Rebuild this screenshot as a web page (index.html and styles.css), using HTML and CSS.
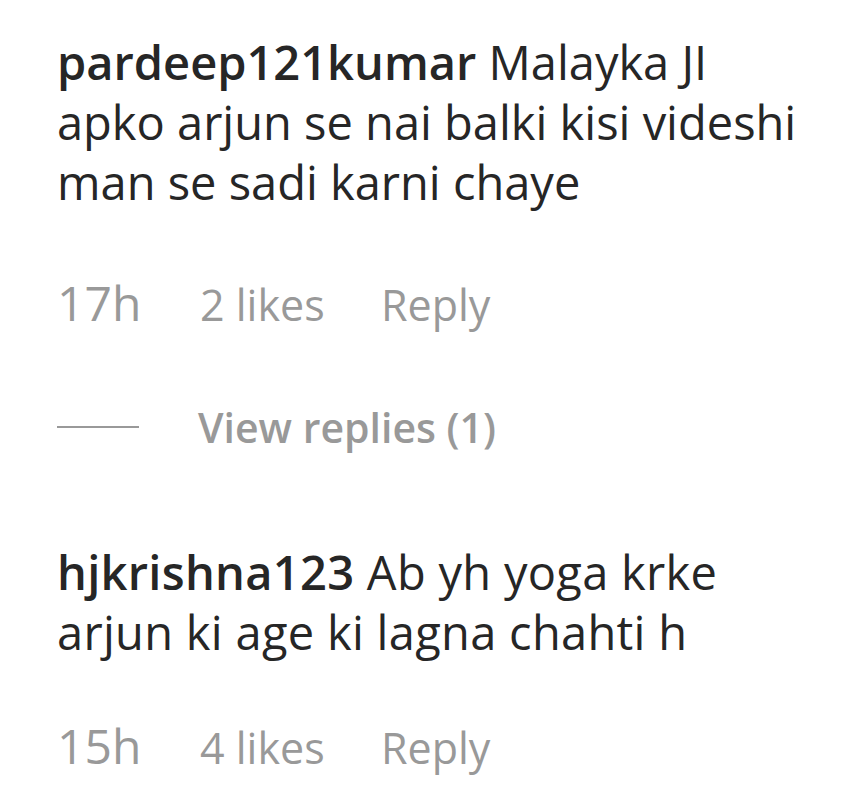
FILE: index.html
```html
<!DOCTYPE html>
<html>
<head>
<meta charset="utf-8">
<link rel="stylesheet" href="styles.css">
</head>
<body>
<div class="comments">
  <div class="comment">
    <p class="text"><span class="user">pardeep121kumar</span> Malayka JI<br>apko arjun se nai balki kisi videshi<br>man se sadi karni chaye</p>
    <div class="meta"><span class="time">17h</span><span class="likes">2 likes</span><span class="reply">Reply</span></div>
    <div class="replies"><span class="line"></span><span class="view">View replies (1)</span></div>
  </div>
  <div class="comment second">
    <p class="text"><span class="user">hjkrishna123</span> Ab yh yoga krke<br>arjun ki age ki lagna chahti h</p>
    <div class="meta"><span class="time">15h</span><span class="likes">4 likes</span><span class="reply">Reply</span></div>
  </div>
</div>
</body>
</html>
```
FILE: styles.css
```css
html, body { margin: 0; padding: 0; background: #fff; }
body { font-family: "Open Sans", "Noto Sans", sans-serif; }
.comments { padding: 32px 0 0 57px; }
.text { margin: 0; font-size: 47px; line-height: 60px; color: #262626; white-space: nowrap; }
.user { font-weight: 600; }
.meta { display: flex; align-items: baseline; height: 60px; line-height: 60px; margin-top: 61px; color: #999; font-size: 43px; }
.time { width: 143px; font-size: 48px; }
.likes { width: 181px; }
.replies { display: flex; align-items: center; margin-top: 64px; height: 60px; line-height: 60px; color: #999; font-size: 41px; font-weight: 600; }
.line { width: 82px; height: 2px; background: #999; margin-right: 59px; }
.second { margin-top: 85px; }
.second .text { letter-spacing: 0.3px; }
.second .meta { margin-top: 54px; }
```
